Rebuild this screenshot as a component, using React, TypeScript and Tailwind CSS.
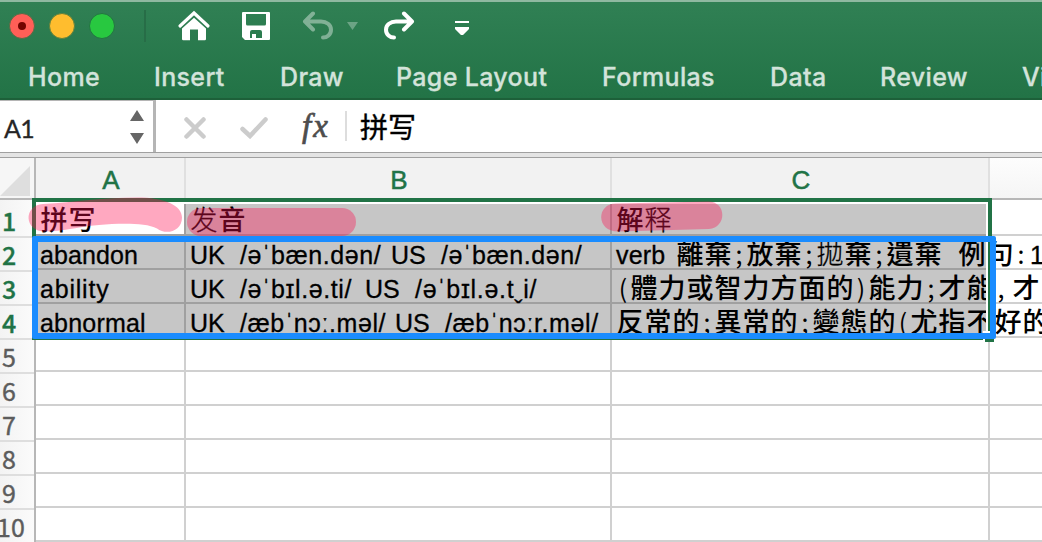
import React from "react";

const tabs = [
  { name: "Home", cls: "w-[126px]" },
  { name: "Insert", cls: "w-[126px]" },
  { name: "Draw", cls: "w-[116px]" },
  { name: "Page Layout", cls: "w-[206px]" },
  { name: "Formulas", cls: "w-[168px]" },
  { name: "Data", cls: "w-[110px]" },
  { name: "Review", cls: "w-[142px]" },
  { name: "View", cls: "w-[80px]" },
];

const latin =
  "pt-[3px] font-['Liberation_Sans','Noto_Sans',sans-serif] text-[25px] [-webkit-text-stroke:0.3px_black]";

/* Han characters take a full 28px column, narrow punctuation half of it. */
function Han({ text }: { text: string }) {
  return (
    <span className="flex shrink-0 pt-px font-['Noto_Sans_CJK_TC',sans-serif] text-[27px] font-medium">
      {Array.from(text).map((c, i) =>
        ";(),:".includes(c) ? (
          <span key={i} className="w-[14px] text-center text-[25px] font-normal">{c}</span>
        ) : "发释拋".includes(c) ? (
          <span key={i} className="w-7 text-center font-light [-webkit-text-stroke:0.3px_black]">{c}</span>
        ) : (
          <span key={i} className="w-7 text-center">{c}</span>
        )
      )}
    </span>
  );
}

function Ipa({ uk, us, w, fit }: { uk: string; us: string; w: string; fit: string }) {
  return (
    <div className={`flex whitespace-nowrap ${latin}`}>
      <span className="w-[50px] shrink-0">UK</span>
      <span className={`shrink-0 tracking-[0.6px] ${w}`}>{uk}</span>
      <span className="w-[50px] shrink-0">US</span>
      <span className={fit}>{us}</span>
    </div>
  );
}

const rows: { a: React.ReactNode; b: React.ReactNode; c: React.ReactNode }[] = [
  {
    a: <Han text="拼写" />,
    b: <Han text="发音" />,
    c: <Han text="解释" />,
  },
  {
    a: <div className={`tracking-[0.1px] ${latin}`}>abandon</div>,
    b: <Ipa uk="/əˈbæn.dən/" us="/əˈbæn.dən/" w="w-[151px]" fit="tracking-[0.6px]" />,
    c: (
      <>
        <span className={`w-[60px] shrink-0 tracking-[0.2px] ${latin}`}>verb</span>
        <Han text="離棄;放棄;拋棄;遺棄" />
        <span className="w-4 shrink-0" />
        <Han text="例句:" />
        <span className={`ml-0.5 ${latin}`}>1</span>
      </>
    ),
  },
  {
    a: <div className={`tracking-[0.8px] ${latin}`}>ability</div>,
    b: <Ipa uk="/əˈbɪl.ə.ti/" us="/əˈbɪl.ə.tˬi/" w="w-[125px]" fit="tracking-[0.7px]" />,
    c: (
      <>
        <Han text="(體力或智力方面的)能力;才能," />
        <span className="w-1 shrink-0" />
        <Han text="才" />
      </>
    ),
  },
  {
    a: <div className={`tracking-[0.2px] ${latin}`}>abnormal</div>,
    b: <Ipa uk="/æbˈnɔː.məl/" us="/æbˈnɔːr.məl/" w="w-[155px]" fit="tracking-[0.6px]" />,
    c: <Han text="反常的;異常的;變態的(尤指不好的" />,
  },
  { a: null, b: null, c: null },
  { a: null, b: null, c: null },
  { a: null, b: null, c: null },
  { a: null, b: null, c: null },
  { a: null, b: null, c: null },
  { a: null, b: null, c: null },
];

export default function App() {
  return (
    <div className="relative h-[542px] w-[1042px] overflow-hidden bg-white">
      <header className="flex h-[100px] flex-col border-t-2 border-b-2 border-t-[#8fb9a1] border-b-[#1d6039] bg-gradient-to-b from-[#308054] to-[#227346]">
        <div className="flex h-12 items-center pl-[9px]">
          <div className="flex gap-[14px]">
            <span className="flex size-[26px] items-center justify-center rounded-full border-[1.5px] border-[#536c46] bg-[#ff5f57]">
              <span className="size-2 rounded-full bg-[#730500]" />
            </span>
            <span className="size-[26px] rounded-full border-[1.5px] border-[#61803c] bg-[#ffbd2e]" />
            <span className="size-[26px] rounded-full border-[1.5px] border-[#237441] bg-[#28c840]" />
          </div>
          <span className="ml-[29px] h-8 w-0.5 bg-[#276d47]" />
          <svg className="ml-[31px] h-8 w-[34px]" viewBox="0 0 34 32" fill="none">
            <path d="M3 16 17 3l14 13" stroke="#fff" strokeWidth="3.200" strokeLinecap="round" />
            <path d="M5 18.500 17 7.800l12 10.700V29q0 1.200-1.200 1.200H21V19.500h-8v10.700H6.200Q5 30.200 5 29Z" fill="#fff" />
          </svg>
          <svg className="ml-[31px] h-7 w-[28px]" viewBox="0 0 28 28">
            <path fillRule="evenodd" fill="#fff" d="M1 0h26q1 0 1 1v26q0 1-1 1H3L0 25V1Q0 0 1 0ZM4 2v10q0 1.500 1.500 1.500h17q1.500 0 1.500-1.500V2ZM10 18q-2 0-2 2v6h2v-4h4v4h6v-6q0-2-2-2Z" />
          </svg>
          <svg className="ml-[32px] h-[30px] w-8" viewBox="0 0 32 30" fill="none">
            <g opacity="0.4" stroke="#fff" strokeWidth="4" strokeLinecap="round" strokeLinejoin="round">
              <path d="M11 2.500 3 10.500l8 8M4 10.500h15c5.500 0 10 3.200 10 8.200S25 26.500 21 26.500" />
            </g>
          </svg>
          <svg className="ml-[13px] h-2 w-[11px]" viewBox="0 0 11 8"><path d="M0 0h11L5.500 8Z" fill="#fff" fillOpacity="0.3" /></svg>
          <svg className="ml-[25px] h-[30px] w-8" viewBox="0 0 32 30" fill="none" stroke="#fff" strokeWidth="4" strokeLinecap="round" strokeLinejoin="round">
            <path d="M21 2.500l8 8-8 8M28 10.500H13C7.500 10.500 3 13.700 3 18.700S7 26.500 11 26.500" />
          </svg>
          <svg className="mt-1 ml-[40px] h-[14px] w-[14px]" viewBox="0 0 14 14" fill="#fff"><path d="M0 0h14v2H0ZM0 6h14v2L8 14H6L0 8Z" /></svg>
        </div>
        <nav className="flex h-[48px] items-center overflow-hidden pt-[7px] pl-[28px] font-['Inter',sans-serif] text-[25px] font-medium tracking-[0.35px] whitespace-nowrap text-[#d3e3da] [-webkit-text-stroke:0.3px_#d3e3da]">
          {tabs.map((t) => (
            <span key={t.name} className={`shrink-0 ${t.cls}`}>{t.name}</span>
          ))}
        </nav>
      </header>

      <div className="flex h-[52px] items-center">
        <div className="flex h-full w-[156px] items-center justify-between border-t border-r-[3px] border-[#b5b5b5] pr-[9px] pl-[4px]">
          <span className="pt-1 font-['Lato',sans-serif] text-[25px] tracking-[-0.8px] text-[#262626] [-webkit-text-stroke:0.3px_#262626]">A1</span>
          <svg className="h-[34px] w-[14px]" viewBox="0 0 14 34" fill="#666"><path d="M7 0l7 11H0ZM7 34l7-11H0Z" /></svg>
        </div>
        <svg className="mt-1 ml-[28px] size-[22px]" viewBox="0 0 22 22" stroke="#ccc" strokeWidth="4.500" strokeLinecap="round"><path d="M2.500 2.500l17 17M19.500 2.500l-17 17" /></svg>
        <svg className="mt-1 ml-[34px] h-[22px] w-7" viewBox="0 0 28 22" fill="none" stroke="#ccc" strokeWidth="4.500" strokeLinecap="round"><path d="M2.500 12l7.500 7L25.500 2.500" /></svg>
        <span className="ml-[34px] w-[43px] font-['Liberation_Serif',serif] text-[33px] leading-none tracking-[2px] text-[#4d4d4d] italic [-webkit-text-stroke:0.7px_#4d4d4d]">fx</span>
        <span className="h-[30px] w-0.5 bg-[#ddd]" />
        <span className="ml-[13px] font-['Noto_Sans_CJK_SC',sans-serif] text-[28px] leading-none [-webkit-text-stroke:0.4px_black]">拼写</span>
      </div>
      <div className="h-[6px] border-y border-[#a0a0a0] bg-[#e4e4e4]" />

      <div className="flex h-[42px] font-['Liberation_Sans',sans-serif] text-[26px] leading-[45px] text-[#217346] [-webkit-text-stroke:0.5px_#217346]">
        <div className="flex w-9 justify-end border-r-2 border-b-2 border-[#b7b7b7] bg-[#f6f6f6] pt-2 pr-1">
          <svg className="h-[30px] w-[30px]" viewBox="0 0 30 30"><path d="M30 0v30H0Z" fill="#dedede" /></svg>
        </div>
        <div className="w-[150px] border-r-2 border-[#e0e0e0] bg-[#f2f2f2] pl-0.5 text-center">A</div>
        <div className="w-[426px] border-r-2 border-[#e0e0e0] bg-[#f2f2f2] pl-0.5 text-center">B</div>
        <div className="w-[378px] border-r-2 border-[#e0e0e0] bg-[#f2f2f2] pl-0.5 text-center">C</div>
        <div className="flex-1 border-b-2 border-[#b7b7b7] bg-gradient-to-b from-[#fdfdfd] to-[#f5f5f5]" />
      </div>

      <div className="flex h-[342px]">
        <div className="w-9 shrink-0 overflow-hidden border-r-2 border-[#b7b7b7] bg-gradient-to-r from-[#f3f3f3] to-[#fbfbfb] pt-[4px]">
          {rows.map((_, i) => (
            <div
              key={i}
              className={`flex h-[34px] items-center border-b-2 border-[#dedede] pt-px font-['Noto_Sans_CJK_JP',sans-serif] text-[25px] leading-none ${i === 9 ? "-ml-[3px]" : "pl-[2px]"} ${i < 4 ? "font-medium text-[#217346] [-webkit-text-stroke:0.3px_#217346]" : "text-[#5c5c5c] [-webkit-text-stroke:0.4px_#5c5c5c]"}`}
            >
              {i + 1}
            </div>
          ))}
        </div>
        <div className="flex flex-1 flex-col pt-[2px] text-black">
          {rows.map((r, i) => {
            const sel = i < 4;
            const edge = sel ? "border-[#a0a0a0]" : "border-[#d0d0d0]";
            return (
              <div key={i} className="flex h-[34px] shrink-0 leading-[32px]">
                <div className={`w-[150px] shrink-0 border-r-2 border-b-2 pl-[4px] ${edge} ${sel && i > 0 ? "bg-[#c6c6c6]" : "bg-white"}`}>{r.a}</div>
                <div className={`w-[426px] shrink-0 border-r-2 border-b-2 pl-[4px] ${edge} ${sel ? "bg-[#c6c6c6]" : "bg-white"}`}>{r.b}</div>
                <div className={`flex w-[378px] shrink-0 border-r-2 border-b-2 pl-[4px] whitespace-nowrap ${edge} ${sel ? "bg-[#c6c6c6]" : "bg-white"}`}>
                  <div className="relative z-10 flex w-0">{r.c}</div>
                </div>
                <div className="flex-1 border-b-2 border-[#d0d0d0]" />
              </div>
            );
          })}
        </div>
      </div>

      {/* Selection outline and its fill handle */}
      <div className="pointer-events-none absolute top-[198px] left-[32px] z-20 h-[142px] w-[960px] border-4 border-[#217346]">
        <div className="size-full border-t-2 border-r-2 border-white" />
      </div>
      <div className="absolute top-[331px] left-[983px] z-20 size-[11px] border-t-2 border-l-2 border-white bg-[#217346]" />

      {/* Annotations drawn over the sheet */}
      <svg className="absolute top-[190px] left-0 z-30 h-[50px] w-[740px]" viewBox="0 190 740 50" fill="#ff0f50" fillOpacity="0.36">
        <path d="M43 204C75 202 103 197.500 137 197.500c28 0 45 8 45 20 0 14-16 18-25 11-12-6-38-5-58-3.500C77 227 62 231.500 45 231.500c-21 0-22-26-2-27.500Z" />
        <rect x="187" y="208" width="169" height="28" rx="14" />
        <path d="M616 203.500 708 201.500c19 0 19 26 1 27.500l-91 2.500c-22 0-22-28-2-28Z" />
      </svg>
      <div className="absolute top-[236px] left-[32px] z-30 h-[103px] w-[964px] rounded-[2px] border-[6px] border-[#1a8cff]" />
    </div>
  );
}
